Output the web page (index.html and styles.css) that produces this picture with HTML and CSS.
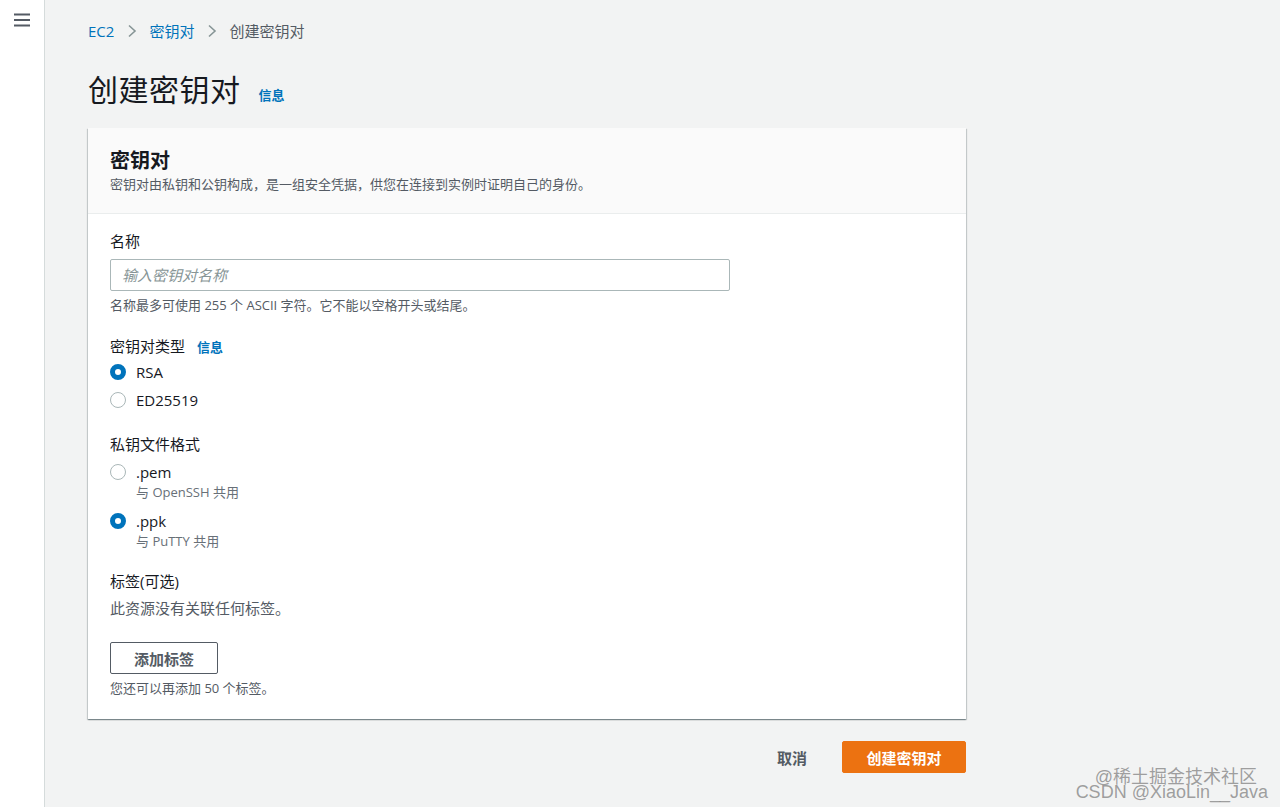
FILE: index.html
```html
<!DOCTYPE html>
<html lang="zh-CN">
<head>
<meta charset="utf-8">
<title>创建密钥对</title>
<link rel="stylesheet" href="styles.css">
</head>
<body>
<aside class="sidebar">
  <svg class="menu-icon" width="18" height="14" viewBox="0 0 18 14"><path d="M1 1.5h16M1 7h16M1 12.5h16" stroke="#545b64" stroke-width="2" fill="none"/></svg>
</aside>
<main class="main">
  <nav class="breadcrumb">
    <a class="crumb-link">EC2</a>
    <svg class="chev" width="10" height="14" viewBox="0 0 10 14"><path d="M2 1.5l6 5.5-6 5.5" stroke="#879596" stroke-width="1.6" fill="none"/></svg>
    <a class="crumb-link">密钥对</a>
    <svg class="chev" width="10" height="14" viewBox="0 0 10 14"><path d="M2 1.5l6 5.5-6 5.5" stroke="#879596" stroke-width="1.6" fill="none"/></svg>
    <span class="crumb-current">创建密钥对</span>
  </nav>
  <header class="page-head">
    <h1 class="page-title">创建密钥对</h1>
    <a class="info-link info-title">信息</a>
  </header>
  <section class="card">
    <div class="card-head">
      <h2 class="card-title">密钥对</h2>
      <p class="card-desc">密钥对由私钥和公钥构成，是一组安全凭据，供您在连接到实例时证明自己的身份。</p>
    </div>
    <div class="card-body">
      <div class="label">名称</div>
      <div class="input">输入密钥对名称</div>
      <div class="hint">名称最多可使用 255 个 ASCII 字符。它不能以空格开头或结尾。</div>

      <div class="label section-label">密钥对类型 <a class="info-link info-inline">信息</a></div>
      <div class="radios">
        <div class="radio-row"><span class="radio checked"></span><span class="radio-text">RSA</span></div>
        <div class="radio-row"><span class="radio"></span><span class="radio-text">ED25519</span></div>
      </div>

      <div class="label section-label2">私钥文件格式</div>
      <div class="radios-desc">
        <div class="radio-item">
          <div class="radio-row"><span class="radio"></span><span class="radio-text">.pem</span></div>
          <div class="radio-desc">与 OpenSSH 共用</div>
        </div>
        <div class="radio-item">
          <div class="radio-row"><span class="radio checked"></span><span class="radio-text">.ppk</span></div>
          <div class="radio-desc">与 PuTTY 共用</div>
        </div>
      </div>

      <div class="label section-label3">标签(可选)</div>
      <div class="empty-text">此资源没有关联任何标签。</div>
      <button class="btn-normal">添加标签</button>
      <div class="hint">您还可以再添加 50 个标签。</div>
    </div>
  </section>
  <div class="footer-actions">
    <button class="btn-link">取消</button>
    <button class="btn-primary">创建密钥对</button>
  </div>
</main>
<div class="watermark">
  <div class="wm1">@稀土掘金技术社区</div>
  <div class="wm2">CSDN @XiaoLin__Java</div>
</div>
</body>
</html>
```
FILE: styles.css
```css
* { box-sizing: border-box; }
html, body { margin: 0; padding: 0; }
body {
  display: flex;
  min-height: 807px;
  height: 807px;
  overflow: hidden;
  background: #f2f3f3;
  font-family: "Open Sans", "Noto Sans CJK SC", sans-serif;
  color: #16191f;
  font-size: 15px;
}
.sidebar {
  width: 45px;
  flex: 0 0 45px;
  background: #ffffff;
  border-right: 1px solid #d5dbdb;
  padding: 13px 0 0 13px;
}
.menu-icon { display: block; }
.main {
  flex: 1;
  padding: 20px 0 0 43px;
  position: relative;
}
.breadcrumb {
  display: flex;
  align-items: center;
  height: 22px;
  line-height: 22px;
  font-size: 15px;
}
.crumb-link { color: #0073bb; }
.chev { margin: 0 12px 0 13px; }
.crumb-current { color: #545b64; }
.page-head {
  display: flex;
  align-items: baseline;
  margin-top: 26px;
  height: 40px;
}
.page-title {
  margin: 0;
  font-family: "Noto Sans CJK SC", sans-serif;
  font-weight: 400;
  font-size: 30px;
  line-height: 40px;
  color: #16191f;
  letter-spacing: 0.5px;
}
.info-link {
  color: #0073bb;
  font-weight: 700;
  font-size: 13px;
}
.info-title { margin-left: 18px; position: relative; top: -1px; }
.info-inline { margin-left: 8px; }
.card {
  width: 878px;
  margin-top: 20px;
  background: #ffffff;
  box-shadow: 0 1px 1px 0 rgba(0, 28, 36, 0.3), 1px 1px 1px 0 rgba(0, 28, 36, 0.15), -1px 1px 1px 0 rgba(0, 28, 36, 0.15);
}
.card-head {
  background: #fafafa;
  border-bottom: 1px solid #eaeded;
  padding: 19px 22px 20px;
}
.card-title {
  margin: 0;
  font-size: 20px;
  line-height: 26px;
  font-weight: 700;
  font-family: "Noto Sans CJK SC", sans-serif;
}
.card-desc {
  margin: 3px 0 0;
  font-size: 13px;
  line-height: 17px;
  color: #545b64;
}
.card-body {
  padding: 17px 22px 23px;
}
.label {
  font-size: 15px;
  line-height: 20px;
  color: #16191f;
}
.input {
  margin-top: 8px;
  width: 620px;
  height: 32px;
  border: 1px solid #aab7b8;
  border-radius: 2px;
  padding: 0 11px;
  line-height: 30px;
  font-style: italic;
  color: #879596;
  font-size: 15px;
}
.hint {
  margin-top: 6px;
  font-size: 13px;
  line-height: 16px;
  color: #545b64;
}
.section-label { margin-top: 23px; }
.section-label2 { margin-top: 24px; }
.section-label3 { margin-top: 22px; }
.radios {
  margin-top: 5px;
  display: flex;
  flex-direction: column;
  gap: 8px;
}
.radio-row {
  display: flex;
  align-items: center;
  height: 20px;
}
.radio {
  width: 16px;
  height: 16px;
  border-radius: 50%;
  border: 1.5px solid #aab7b8;
  background: #ffffff;
  flex: 0 0 16px;
}
.radio.checked {
  border: 5px solid #0073bb;
}
.radio-text {
  margin-left: 10px;
  font-size: 15px;
  color: #16191f;
}
.radios-desc {
  margin-top: 8px;
  display: flex;
  flex-direction: column;
  gap: 11px;
}
.radio-desc {
  margin-top: 2px;
  margin-left: 26px;
  font-size: 13px;
  line-height: 16px;
  color: #687078;
}
.empty-text {
  margin-top: 7px;
  font-size: 15px;
  line-height: 20px;
  color: #545b64;
}
.btn-normal {
  display: block;
  margin-top: 24px;
  width: 108px;
  height: 32px;
  background: #ffffff;
  border: 1px solid #545b64;
  border-radius: 2px;
  font-family: "Open Sans", "Noto Sans CJK SC", sans-serif;
  font-weight: 700;
  font-size: 15px;
  color: #545b64;
  padding: 0;
}
.footer-actions {
  width: 878px;
  margin-top: 22px;
  display: flex;
  justify-content: flex-end;
  align-items: center;
  gap: 15px;
}
.btn-link {
  height: 32px;
  padding: 0 20px;
  background: transparent;
  border: none;
  font-family: "Open Sans", "Noto Sans CJK SC", sans-serif;
  font-weight: 700;
  font-size: 15px;
  color: #545b64;
}
.btn-primary {
  height: 32px;
  width: 124px;
  padding: 0;
  background: #ec7211;
  border: 1px solid #ec7211;
  border-radius: 2px;
  font-family: "Open Sans", "Noto Sans CJK SC", sans-serif;
  font-weight: 700;
  font-size: 15px;
  color: #ffffff;
}
.watermark {
  position: absolute;
  right: 12px;
  bottom: 7px;
  text-align: right;
  color: rgba(120, 120, 120, 0.7);
  font-family: "Liberation Sans", "Noto Sans CJK SC", sans-serif;
  font-size: 18px;
  line-height: 15px;
  pointer-events: none;
}
.wm1 { margin-right: 11px; }
```
